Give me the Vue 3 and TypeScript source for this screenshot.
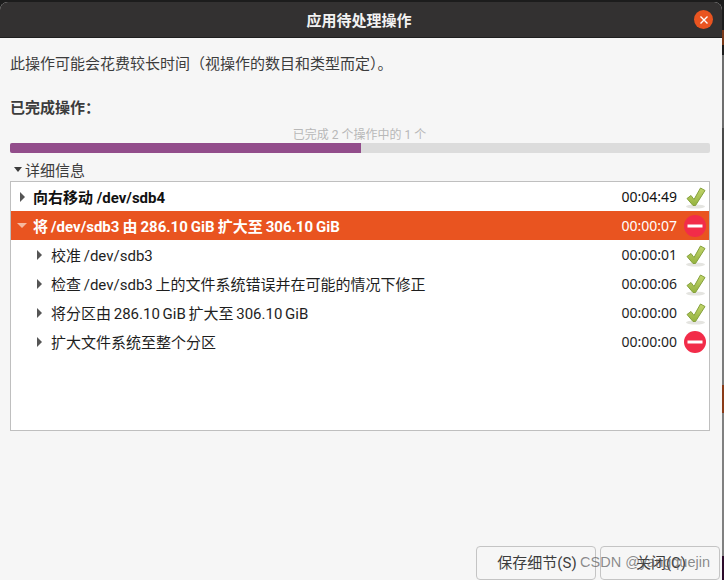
<script setup lang="ts">
interface Row { text: string; time: string; ok: boolean; child: boolean; cls?: string; open?: boolean }
const rows: Row[] = [
  { text: '向右移动 /dev/sdb4', time: '00:04:49', ok: true, child: false, cls: 'bold' },
  { text: '将 /dev/sdb3 由 286.10 GiB 扩大至 306.10 GiB', time: '00:00:07', ok: false, child: false, cls: 'sel', open: true },
  { text: '校准 /dev/sdb3', time: '00:00:01', ok: true, child: true },
  { text: '检查 /dev/sdb3 上的文件系统错误并在可能的情况下修正', time: '00:00:06', ok: true, child: true },
  { text: '将分区由 286.10 GiB 扩大至 306.10 GiB', time: '00:00:00', ok: true, child: true },
  { text: '扩大文件系统至整个分区', time: '00:00:00', ok: false, child: true },
]
</script>

<template>
  <div class="screen">
    <div class="window">
      <header class="titlebar">
        <span class="title">应用待处理操作</span>
        <span class="close">
          <svg width="10" height="10" viewBox="0 0 10 10"><path d="M1.5 1.5l7 7M8.5 1.5l-7 7" stroke="#fff" stroke-width="1.4" fill="none" /></svg>
        </span>
      </header>
      <main class="body">
        <p class="intro">此操作可能会花费较长时间（视操作的数目和类型而定）。</p>
        <p class="done">已完成操作：</p>
        <p class="progress-label">已完成 2 个操作中的 1 个</p>
        <div class="progress"><div class="progress-fill"></div></div>
        <div class="details"><span class="arrow-down"></span>详细信息</div>
        <div class="list">
          <div v-for="r in rows" :key="r.text" class="row" :class="[r.cls, { child: r.child }]">
            <span :class="r.open ? 'tw-open' : 'tw'"></span>
            <span class="text">{{ r.text }}</span>
            <span class="time">{{ r.time }}</span>
            <svg v-if="r.ok" class="icon" width="24" height="24" viewBox="0 0 24 24">
              <defs>
                <linearGradient id="chk" x1="0" y1="0" x2="0" y2="1">
                  <stop offset="0" stop-color="#c3d66c" />
                  <stop offset="1" stop-color="#94b23f" />
                </linearGradient>
              </defs>
              <ellipse cx="12.5" cy="21.5" rx="9.5" ry="2" fill="#e4e4e0" />
              <path d="M4 13.5L8 10.5L11 14.5L17.5 3L22 5.5L12.5 20.5H10Z" fill="url(#chk)" stroke="#85a03c" stroke-width="1" stroke-linejoin="round" />
            </svg>
            <svg v-else class="icon" width="24" height="24" viewBox="0 0 24 24">
              <circle cx="12" cy="12" r="11" fill="#f22c49" />
              <rect x="4.5" y="10.5" width="15" height="3" fill="#fff" />
            </svg>
          </div>
        </div>
        <footer class="actions">
          <button class="btn">保存细节(S)</button>
          <button class="btn">关闭(C)</button>
        </footer>
      </main>
      <span class="watermark">CSDN @yangquejin</span>
    </div>
  </div>
</template>

<style>
html, body { margin: 0; background: #1c1c1c; }
</style>

<style scoped>
.screen {
  width: 724px;
  height: 580px;
  overflow: hidden;
  padding-top: 2px;
  box-sizing: border-box;
  font-family: Roboto, "Noto Sans CJK SC", sans-serif;
  font-size: 15px;
  color: #3c3c3c;
  background: linear-gradient(to bottom,
    #1c1c1c 0, #1c1c1c 30px, #7a3a1a 30px, #7a3a1a 45px, #1c1c1c 45px, #1c1c1c 55px,
    #6e6e6e 55px, #6e6e6e 128px, #4a4a4a 128px, #4a4a4a 200px,
    #7c7c7c 200px, #7c7c7c 385px, #8a3a17 385px, #8a3a17 413px,
    #808080 413px, #808080 556px, #2c0a2a 556px, #2c0a2a 580px);
}
.window {
  position: relative;
  width: 722px;
  height: 578px;
  background: #f6f6f6;
  border-radius: 8px 8px 0 0;
  overflow: hidden;
  display: flex;
  flex-direction: column;
}
.titlebar {
  height: 36px;
  flex: none;
  background: #333131;
  display: flex;
  align-items: center;
  justify-content: center;
  position: relative;
  border-bottom: 1px solid #1f1f1f;
  box-sizing: border-box;
  padding-right: 4px;
}
.title { color: #f2f2f2; font-weight: 700; font-size: 15px; }
.close {
  position: absolute;
  right: 9px;
  top: 8px;
  width: 19px;
  height: 19px;
  border-radius: 50%;
  background: #e95420;
  display: flex;
  align-items: center;
  justify-content: center;
}
.body {
  flex: 1;
  display: flex;
  flex-direction: column;
  padding: 0 12px 0 10px;
  min-height: 0;
}
p { margin: 0; }
.intro { margin-top: 15px; line-height: 22px; }
.done { margin-top: 22px; font-weight: 700; line-height: 22px; }
.progress-label { margin-top: 9px; text-align: center; font-size: 12px; line-height: 14px; color: #b8b8b8; padding-right: 1px; }
.progress {
  margin-top: 1px;
  height: 10px;
  background: #dcdcdc;
  border-radius: 2px;
  overflow: hidden;
}
.progress-fill { width: 351px; height: 100%; background: #924d8b; }
.details { margin-top: 8px; display: flex; align-items: center; line-height: 20px; }
.arrow-down {
  width: 0;
  height: 0;
  border-left: 4.5px solid transparent;
  border-right: 4.5px solid transparent;
  border-top: 5px solid #3c3c3c;
  margin: 0 3px 3px 4px;
}
.list {
  height: 250px;
  background: #fff;
  border: 1px solid #bfbfbf;
  box-sizing: border-box;
}
.row {
  height: 29px;
  display: flex;
  align-items: center;
  padding: 0 2px 0 6px;
  color: #1e1e1e;
  word-spacing: -1px;
}
.row.bold { font-weight: 700; color: #111; word-spacing: 0; }
.row.sel { background: #e95420; color: #fff; font-weight: 700; word-spacing: -0.7px; }
.row.child { padding-left: 23px; }
.tw {
  width: 0;
  height: 0;
  border-top: 5px solid transparent;
  border-bottom: 5px solid transparent;
  border-left: 5px solid #555;
  margin: 0 8px 0 3px;
}
.row.child .tw { margin-right: 9px; }
.tw-open {
  width: 0;
  height: 0;
  border-left: 5px solid transparent;
  border-right: 5px solid transparent;
  border-top: 5px solid #f5b9a0;
  margin: 0 6px 0 0;
}
.text { flex: 1; }
.time { font-family: "Noto Sans", sans-serif; font-size: 14px; font-weight: 400; margin-right: 6px; }
.icon { flex: none; }
.actions {
  margin-top: auto;
  display: flex;
  justify-content: flex-end;
  gap: 4px;
  margin-right: -10px;
  margin-bottom: 0;
}
.btn {
  width: 120px;
  height: 34px;
  background: #f6f6f6;
  border: 1px solid #c4c4c4;
  border-radius: 4px;
  font: inherit;
  color: #3c3c3c;
  padding: 0 0 3px 2px;
}
.watermark {
  position: absolute;
  right: 12px;
  bottom: 10px;
  font-family: "Liberation Sans", sans-serif;
  font-size: 14.5px;
  color: rgba(90, 90, 90, 0.7);
}
</style>
